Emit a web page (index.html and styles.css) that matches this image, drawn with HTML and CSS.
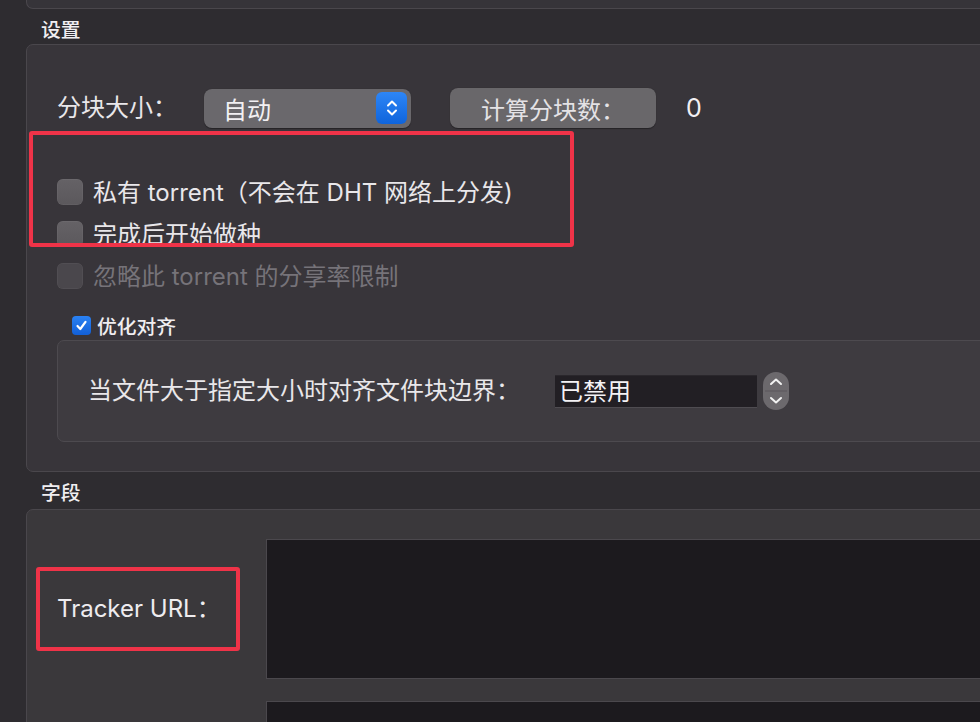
FILE: index.html
```html
<!DOCTYPE html>
<html lang="zh-CN">
<head>
<meta charset="utf-8">
<title>设置</title>
<link rel="stylesheet" href="styles.css">
</head>
<body>
<div class="window">
  <div class="top-box"></div>

  <div class="section-title">设置</div>
  <div class="group settings">
    <div class="row piece-row">
      <span class="label piece-label">分块大小：</span>
      <div class="popup">
        <span class="popup-text">自动</span>
        <span class="popup-arrows">
          <svg width="14" height="22" viewBox="0 0 14 22"><path d="M3 8.5 L7 4.5 L11 8.5 M3 13.5 L7 17.5 L11 13.5" fill="none" stroke="#fff" stroke-width="2" stroke-linecap="round" stroke-linejoin="round"/></svg>
        </span>
      </div>
      <div class="button">计算分块数：</div>
      <span class="count">0</span>
    </div>

    <div class="check-row">
      <span class="checkbox"></span>
      <span class="label">私有 torrent（不会在 DHT 网络上分发)</span>
    </div>
    <div class="check-row">
      <span class="checkbox"></span>
      <span class="label">完成后开始做种</span>
    </div>
    <div class="check-row disabled">
      <span class="checkbox"></span>
      <span class="label">忽略此 torrent 的分享率限制</span>
    </div>

    <div class="align-row">
      <span class="small-check">
        <svg width="13" height="13" viewBox="0 0 13 13"><path d="M2.5 7 L5.3 10 L10.5 2.8" fill="none" stroke="#fff" stroke-width="2.2" stroke-linecap="round" stroke-linejoin="round"/></svg>
      </span>
      <span class="small-label">优化对齐</span>
    </div>
    <div class="group inner">
      <span class="label align-label">当文件大于指定大小时对齐文件块边界：</span>
      <div class="field">已禁用</div>
      <div class="stepper">
        <svg width="26" height="38" viewBox="0 0 26 38"><path d="M8 12 L13 7.5 L18 12" fill="none" stroke="#f2f2f2" stroke-width="2" stroke-linecap="round" stroke-linejoin="round"/><path d="M2 19 H24" stroke="#5a575c" stroke-width="1"/><path d="M8 26 L13 30.5 L18 26" fill="none" stroke="#f2f2f2" stroke-width="2" stroke-linecap="round" stroke-linejoin="round"/></svg>
      </div>
    </div>
  </div>

  <div class="section-title fields-title">字段</div>
  <div class="group fields">
    <div class="field-row">
      <span class="label tracker-label">Tracker URL：</span>
      <div class="textarea"></div>
    </div>
    <div class="field-row">
      <span class="label"></span>
      <div class="textarea"></div>
    </div>
  </div>
</div>

<div class="highlight hl-checks"></div>
<div class="highlight hl-tracker"></div>
</body>
</html>
```

FILE: styles.css
```css
html, body {
  margin: 0;
  padding: 0;
}
body {
  position: relative;
  width: 980px;
  height: 722px;
  overflow: hidden;
  background: #2e2c30;
  color: #e9e7ea;
  font-family: "Inter", "Noto Sans CJK SC", sans-serif;
  font-size: 24px;
}
.window {
  padding-left: 26px;
  width: 1100px;
}
.top-box {
  height: 9px;
  box-sizing: border-box;
  background: #363439;
  border-left: 1px solid #4a474c;
  border-bottom: 1px solid #4a474c;
  border-bottom-left-radius: 7px;
}
.section-title {
  box-sizing: border-box;
  height: 35px;
  padding: 7px 0 0 15px;
  line-height: 28px;
  font-size: 19.8px;
  font-weight: 500;
  color: #f0eef1;
}
.fields-title {
  height: 37px;
}
.group {
  box-sizing: border-box;
  background: #38353a;
  border: 1px solid #4a474c;
  border-radius: 7px;
}
.settings {
  height: 428px;
  padding-left: 30px;
}
.row {
  display: flex;
  align-items: center;
}
.piece-row {
  margin-top: 43px;
  height: 40px;
}
.label {
  line-height: 1.2;
  white-space: nowrap;
}
.piece-label {
  width: 147px;
}
.popup {
  box-sizing: border-box;
  width: 207px;
  height: 39px;
  border-radius: 8px;
  background: #6a686c;
  box-shadow: 0 0.5px 1px rgba(0,0,0,0.35);
  display: flex;
  align-items: center;
  justify-content: space-between;
  padding: 0 4px 0 19px;
}
.popup-text {
  color: #f2f0f3;
}
.popup-arrows {
  width: 31px;
  height: 32px;
  border-radius: 6px;
  background: linear-gradient(#2d86f7, #0f64db);
  display: flex;
  align-items: center;
  justify-content: center;
}
.button {
  margin-left: 39px;
  width: 206px;
  height: 40px;
  border-radius: 8px;
  background: #69676a;
  box-shadow: 0 0.5px 1px rgba(0,0,0,0.35);
  display: flex;
  align-items: center;
  justify-content: center;
  color: #e4e2e5;
}
.count {
  margin-left: 30px;
  font-size: 25px;
  color: #f2f0f3;
}
.check-row {
  height: 42px;
  display: flex;
  align-items: center;
}
.piece-row + .check-row {
  margin-top: 43px;
}
.check-row .label {
  padding-top: 2px;
}
.checkbox {
  width: 26px;
  height: 26px;
  border-radius: 6px;
  background: linear-gradient(#656266, #5b585c);
  box-shadow: inset 0 0 0 0.5px rgba(255,255,255,0.08);
  margin-right: 10px;
  flex: none;
}
.disabled .checkbox {
  background: #4a474c;
}
.disabled .label {
  color: #767379;
}
.align-row {
  margin-top: 13px;
  height: 30px;
  display: flex;
  align-items: center;
  padding-left: 15px;
}
.small-check {
  width: 19px;
  height: 19px;
  border-radius: 4px;
  background: linear-gradient(#2a82f4, #125fd6);
  display: flex;
  align-items: center;
  justify-content: center;
  margin-right: 6px;
}
.small-label {
  font-size: 19.8px;
  font-weight: 500;
  color: #f0eef1;
}
.inner {
  height: 102px;
  background: #3e3b40;
  border-color: #4d4a4f;
  display: flex;
  align-items: center;
  padding-left: 30px;
}
.align-label {
  width: 467px;
}
.field {
  box-sizing: border-box;
  width: 202px;
  height: 33px;
  background: #221f24;
  border-top: 1px solid #2a272c;
  border-bottom: 1px solid #4f4c51;
  padding-left: 4px;
  line-height: 31px;
  color: #f4f2f5;
}
.stepper {
  margin-left: 6px;
  width: 26px;
  height: 38px;
  border-radius: 13px;
  background: #6c696d;
  display: flex;
}
.fields {
  height: 240px;
  padding: 29px 0 0 30px;
  background: #3a383b;
}
.field-row {
  display: grid;
  grid-template-columns: 209px 1fr;
  align-items: center;
  margin-bottom: 22px;
}
.tracker-label {
  color: #eeecef;
}
.textarea {
  box-sizing: border-box;
  height: 140px;
  background: #1c1a1e;
  border: 1px solid #4b484d;
  border-right: none;
}
.highlight {
  position: absolute;
  box-sizing: border-box;
  border: 4px solid #ef3348;
  border-radius: 3px;
}
.hl-checks {
  left: 29px;
  top: 131px;
  width: 545px;
  height: 116px;
}
.hl-tracker {
  left: 36px;
  top: 567px;
  width: 204px;
  height: 84px;
}
```
